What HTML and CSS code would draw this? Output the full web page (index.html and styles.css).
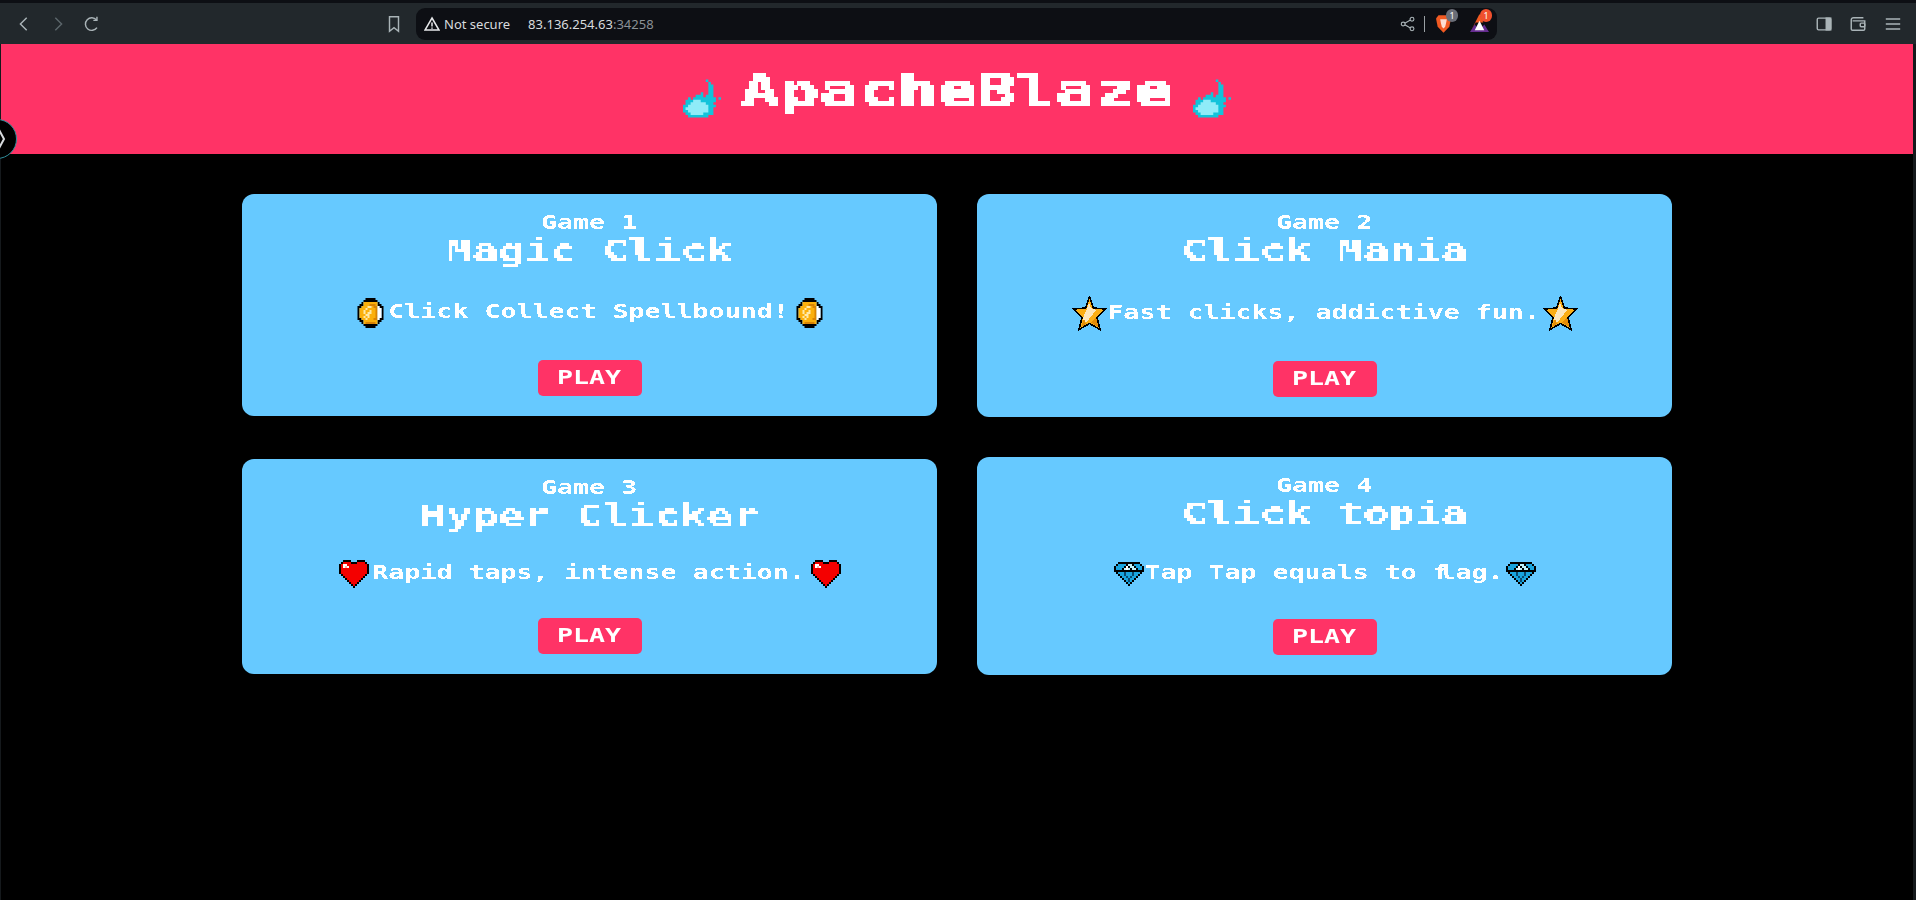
FILE: index.html
```html
<!DOCTYPE html>
<html lang="en">
<head>
  <meta charset="UTF-8" />
  <title>ApacheBlaze</title>
  <link rel="stylesheet" href="styles.css">
</head>
<body>
  <!-- text filters and the shared pixel icons -->
  <svg class="defs" width="0" height="0">
    <defs>
      <filter id="px5" x="0" y="0" width="100%" height="100%">
        <feFlood x="2" y="2" width="1" height="1" flood-color="#000"/>
        <feComposite width="4" height="4"/>
        <feTile result="grid"/>
        <feComposite in="SourceGraphic" in2="grid" operator="in"/>
        <feMorphology operator="dilate" radius="2"/>
        <feComponentTransfer><feFuncA type="discrete" tableValues="0 1"/></feComponentTransfer>
      </filter>
      <filter id="px3" x="0" y="0" width="100%" height="100%">
        <feFlood x="1" y="1" width="1" height="1" flood-color="#000"/>
        <feComposite width="3" height="3"/>
        <feTile result="grid"/>
        <feComposite in="SourceGraphic" in2="grid" operator="in"/>
        <feMorphology operator="dilate" radius="1"/>
        <feComponentTransfer><feFuncA type="discrete" tableValues="0 1"/></feComponentTransfer>
      </filter>
      <filter id="crisp" x="0" y="0" width="100%" height="100%">
        <feComponentTransfer><feFuncA type="discrete" tableValues="0 1"/></feComponentTransfer>
      </filter>

      <symbol id="flame" viewBox="0 -.5 15 15">
        <path stroke="#12c3da" d="M9 0h1M10 1h1M10 2h2M10 3h2M10 4h2M7 5h1M10 5h2M5 6h3M9 6h3M2 7h1M4 7h9M14 7h1M1 8h12M1 9h11M0 10h13M0 11h12M0 12h12M1 13h11M2 14h8"/>
        <path stroke="#8fecf8" d="M4 8h3M3 9h6M2 10h8M1 11h9M2 12h8M3 13h5"/>
      </symbol>

      <symbol id="coin" viewBox="0 -.5 13 15">
        <path stroke="#000" d="M4 0h5M3 1h7M2 2h1M10 2h1M1 3h2M10 3h2M0 4h2M11 4h2M0 5h1M12 5h1M0 6h1M12 6h1M0 7h1M12 7h1M0 8h1M12 8h1M0 9h1M12 9h1M0 10h2M11 10h2M1 11h2M10 11h2M2 12h1M10 12h1M3 13h7M4 14h5"/>
        <path stroke="#fbb00c" d="M3 2h7M3 3h7M2 4h8M1 5h9M1 6h9M1 7h9M1 8h9M1 9h9M2 10h8M3 11h7M3 12h7"/>
        <path stroke="#d98303" d="M6 3h3M8 4h2M9 5h1M9 6h1M9 7h1M9 8h1M9 9h1M8 10h2M4 12h5"/>
        <path stroke="#fff" d="M10 4h1M10 5h2M10 6h2M10 7h2M10 8h2M10 9h2M10 10h1"/>
        <path stroke="#ffe9a8" d="M5 4h2M4 5h1M3 6h1M6 6h1M3 7h1M5 7h2M4 8h2M3 9h1M5 9h1M4 10h1"/>
      </symbol>

      <symbol id="star" viewBox="0 0 35 35">
        <polygon points="17.500,1 21.500,12 33.500,13 25,21.500 28,33.500 17.500,27.500 7,33.500 10,21.500 1.500,13 13.500,12" fill="#fbae15" stroke="#000" stroke-width="1.600" shape-rendering="crispEdges"/>
        <polygon points="17,7 19,12 24,14 21,18 14,27 11,23 13,17 15,13" fill="#fde7bd" shape-rendering="crispEdges"/>
        <polygon points="24,21 26.500,31 19,26.500" fill="#e48c06" shape-rendering="crispEdges"/>
        <polygon points="12,22 9.500,31 14,28" fill="#e48c06" shape-rendering="crispEdges"/>
      </symbol>

      <symbol id="heart" viewBox="0 -.5 15 14">
        <path stroke="#000" d="M2 0h4M9 0h4M1 1h1M6 1h3M13 1h1M0 2h1M14 2h1M0 3h1M14 3h1M0 4h1M14 4h1M0 5h1M14 5h1M0 6h1M14 6h1M1 7h1M13 7h1M2 8h1M12 8h1M3 9h1M11 9h1M4 10h1M10 10h1M5 11h1M9 11h1M6 12h1M8 12h1M7 13h1"/>
        <path stroke="#f40000" d="M2 1h4M9 1h4M1 2h13M1 3h13M1 4h13M1 5h13M1 6h13M2 7h11M3 8h9M4 9h7M5 10h5M6 11h3M7 12h1"/>
        <path stroke="#fff" d="M2 2h2M2 3h1M4 3h1"/>
        <path stroke="#ffb0b0" d="M3 3h1"/>
      </symbol>

      <symbol id="gem" viewBox="0 -.5 15 12">
        <path stroke="#000" d="M2 0h11M1 1h1M6 1h1M9 1h1M13 1h1M0 2h1M5 2h1M7 2h1M10 2h1M14 2h1M0 3h1M4 3h1M8 3h1M11 3h1M14 3h1M0 4h15M1 5h1M13 5h1M2 6h1M12 6h1M3 7h1M11 7h1M4 8h1M10 8h1M5 9h1M9 9h1M6 10h1M8 10h1M7 11h1"/>
        <path stroke="#19a4de" d="M2 1h4M10 1h3M1 2h4M11 2h3M1 3h3M12 3h2M2 5h11M3 6h9M4 7h7M5 8h5M6 9h3M7 10h1"/>
        <path stroke="#bff2fb" d="M7 1h2M8 2h2M9 3h2M5 3h3"/>
        <path stroke="#fff" d="M6 2h1M6 3h1"/>
        <path stroke="#0a4a70" d="M5 5h1M9 5h1M5 6h1M9 6h1M6 7h1M8 7h1M7 8h1M7 9h1"/>
      </symbol>
    </defs>
  </svg>

  <div class="toolbar">
    <svg class="tool tool-back" viewBox="0 0 20 20"><path d="M13 3l-7 7 7 7"/></svg>
    <svg class="tool tool-fwd" viewBox="0 0 20 20"><path d="M7 3l7 7-7 7"/></svg>
    <svg class="tool tool-reload" viewBox="0 0 20 20"><path d="M15 5.500A7 7 0 1 0 15.500 14"/><path d="M15.500 2v4h-4"/></svg>
    <svg class="tool tool-mark" viewBox="0 0 20 20"><path d="M5 2h10v16l-5-4-5 4z"/></svg>

    <div class="omnibox">
      <svg class="warn" viewBox="0 0 16 16"><path d="M8 2l7 12H1z"/><path d="M8 6.500v4M8 11.500v1.200"/></svg>
      <span class="secure">Not secure</span>
      <span class="url">83.136.254.63<span class="port">:34258</span></span>
      <svg class="tool tool-share" viewBox="0 0 20 20"><circle cx="15" cy="4" r="2.400"/><circle cx="15" cy="16" r="2.400"/><circle cx="4" cy="10" r="2.400"/><path d="M6 9l7-4M6 11l7 4"/></svg>
      <span class="divider"></span>
      <span class="ext ext-brave">
        <svg viewBox="0 0 18 22"><path class="lion" d="M3 1h12l3 4-2 10-7 7-7-7L0 5z"/><path class="lion-face" d="M5 6h8l-1 5-1 4-2 2-2-2-1-4z"/></svg>
        <span class="badge badge-grey">1</span>
      </span>
      <span class="ext ext-bat">
        <svg viewBox="0 0 20 20"><path fill="#f15a22" d="M10 0l4 9H6L1 18z"/><path fill="#662d91" d="M0 19l5-8 5 6 5-6 5 8z"/><path fill="#fff" d="M10 7l5 10H5z"/></svg>
        <span class="badge badge-red">1</span>
      </span>
    </div>

    <svg class="tool tool-panel" viewBox="0 0 20 20"><rect x="2.500" y="3.500" width="15" height="13" rx="1.500"/><rect class="solid" x="12.500" y="3.500" width="5" height="13"/></svg>
    <svg class="tool tool-wallet" viewBox="0 0 20 20"><path d="M16 3H5a2.500 2.500 0 0 0-2.500 2.500v10A1.500 1.500 0 0 0 4 17h12a1.500 1.500 0 0 0 1.500-1.500v-9H4"/><rect x="12.500" y="9" width="5" height="4" rx="1"/></svg>
    <svg class="tool tool-menu" viewBox="0 0 20 20"><path d="M2 4.500h16M2 10h16M2 15.500h16"/></svg>
  </div>

  <div class="frame">
    <div class="page">
      <header class="hero">
        <svg class="flame"><use href="#flame"/></svg>
        <h1 class="hero-title"><span>ApacheBlaze</span></h1>
        <svg class="flame"><use href="#flame"/></svg>
      </header>

      <div class="games">
        <div class="card card-top">
          <h3 class="game-no"><span>Game 1</span></h3>
          <h2 class="game-name"><span>Magic Click</span></h2>
          <div class="desc desc-coin">
            <svg class="icon coin"><use href="#coin"/></svg>
            <p class="desc-text" style="--chars:25"><span>Click Collect Spellbound!</span></p>
            <svg class="icon coin"><use href="#coin"/></svg>
          </div>
          <a class="play" href="#"><span>PLAY</span></a>
        </div>

        <div class="card">
          <h3 class="game-no"><span>Game 2</span></h3>
          <h2 class="game-name"><span>Click Mania</span></h2>
          <div class="desc desc-star">
            <svg class="icon star"><use href="#star"/></svg>
            <p class="desc-text" style="--chars:27"><span>Fast clicks, addictive fun.</span></p>
            <svg class="icon star"><use href="#star"/></svg>
          </div>
          <a class="play" href="#"><span>PLAY</span></a>
        </div>

        <div class="card">
          <h3 class="game-no"><span>Game 3</span></h3>
          <h2 class="game-name"><span>Hyper Clicker</span></h2>
          <div class="desc desc-heart">
            <svg class="icon heart"><use href="#heart"/></svg>
            <p class="desc-text" style="--chars:27"><span>Rapid taps, intense action.</span></p>
            <svg class="icon heart"><use href="#heart"/></svg>
          </div>
          <a class="play" href="#"><span>PLAY</span></a>
        </div>

        <div class="card">
          <h3 class="game-no"><span>Game 4</span></h3>
          <h2 class="game-name"><span>Click topia</span></h2>
          <div class="desc desc-gem">
            <svg class="icon gem"><use href="#gem"/></svg>
            <p class="desc-text" style="--chars:22"><span>Tap Tap equals to <i class="tight">f</i>lag.</span></p>
            <svg class="icon gem"><use href="#gem"/></svg>
          </div>
          <a class="play" href="#"><span>PLAY</span></a>
        </div>
      </div>

      <div class="float-btn">
        <svg viewBox="0 0 38 38"><path d="M20 8l6 11-6 11"/></svg>
      </div>
    </div>
  </div>
</body>
</html>
```

FILE: styles.css
```css
* {
  box-sizing: border-box;
}

html,
body {
  margin: 0;
  height: 100%;
}

body {
  display: flex;
  flex-direction: column;
  background: #000;
  overflow: hidden;
  font-family: "Noto Sans", sans-serif;
}

.defs {
  position: absolute;
}

/* browser chrome */
.toolbar {
  display: flex;
  align-items: center;
  flex: 0 0 44px;
  padding-right: 14px;
  background: #22282c;
  border-top: 3px solid #0d0f14;
}

.tool {
  flex: none;
  width: 18px;
  height: 18px;
  fill: none;
  stroke: #aab4b8;
  stroke-width: 1.6;
}

.tool-back {
  margin-left: 15px;
}

.tool-fwd {
  margin-left: 16px;
  stroke: #5c666b;
}

.tool-reload {
  margin-left: 16px;
}

.tool-mark {
  margin-left: 284px;
}

.omnibox {
  display: flex;
  align-items: center;
  width: 1089px;
  height: 32px;
  margin-left: 13px;
  background: #0d0f14;
  border-radius: 9px;
}

.warn {
  width: 16px;
  height: 16px;
  margin-left: 8px;
  fill: none;
  stroke: #e6e8ea;
  stroke-width: 1.5;
}

.secure {
  margin-left: 4px;
  font-size: 13px;
  color: #d8dbde;
}

.url {
  margin-left: 18px;
  font-size: 13px;
  color: #d8dbde;
}

.port {
  color: #8b9196;
}

.tool-share {
  width: 16px;
  height: 16px;
  margin-left: auto;
  stroke-width: 1.4;
}

.divider {
  width: 1px;
  height: 16px;
  margin: 0 0 0 8px;
  background: #9aa0a4;
}

.ext {
  position: relative;
  display: flex;
}

.ext-brave {
  margin-left: 11px;
}

.ext-brave svg {
  width: 15px;
  height: 19px;
}

.lion {
  fill: #f15a22;
}

.lion-face {
  fill: #fff;
  opacity: 0.8;
}

.ext-bat {
  margin: 0 8px 0 19px;
}

.ext-bat svg {
  width: 19px;
  height: 19px;
}

.badge {
  position: absolute;
  top: -5px;
  left: 10px;
  width: 12px;
  height: 13px;
  border-radius: 6px;
  font-size: 9px;
  line-height: 13px;
  text-align: center;
  color: #fff;
}

.badge-grey {
  background: #6a6e78;
}

.badge-red {
  background: #f0502d;
}

.tool-panel {
  margin-left: 318px;
}

.solid {
  fill: #aab4b8;
}

.tool-wallet {
  margin-left: 16px;
}

.tool-menu {
  margin-left: 17px;
}

/* page */
.frame {
  flex: 1;
  padding: 0 3px 0 1px;
  background: #15191c;
}

.page {
  position: relative;
  height: 100%;
  background: #000;
  color: #fff;
  font-family: "DejaVu Sans Mono", monospace;
  font-weight: bold;
}

.hero {
  display: flex;
  justify-content: center;
  align-items: flex-start;
  height: 110px;
  padding-top: 35px;
  background: #ff3366;
}

.flame {
  width: 38px;
  height: 39px;
}

.hero-title {
  width: 472px;
  margin: -18px 0 0;
  font-size: 45px;
  line-height: 60px;
  text-align: center;
  filter: url(#px5);
}

.hero-title span {
  display: inline-block;
  transform: scaleX(1.454);
}

.games {
  display: grid;
  grid-template-columns: 695px 695px;
  justify-content: center;
  align-items: center;
  gap: 40px;
  margin-top: 40px;
}

.card {
  display: flex;
  flex-direction: column;
  align-items: center;
  padding: 16px 0 20px;
  background: #66c9ff;
  border-radius: 12px;
}

.card-top {
  align-self: start;
}

.game-no {
  width: 100%;
  margin: 0;
  font-size: 20px;
  line-height: 24px;
  text-align: center;
  filter: url(#crisp);
}

.game-no span,
.desc-text span,
.play span {
  display: inline-block;
  transform: scaleX(1.33);
}

.game-name {
  width: 100%;
  margin: 0;
  font-size: 30px;
  line-height: 34px;
  text-align: center;
  filter: url(#px3);
}

.game-name span {
  display: inline-block;
  transform: scaleX(1.44);
}

.desc {
  display: flex;
  align-items: center;
  justify-content: center;
  margin: 25px 0 27px;
}

.desc-coin {
  height: 40px;
}

.desc-star {
  height: 41px;
}

.desc-heart {
  height: 33px;
}

.desc-gem {
  height: 36px;
}

.icon {
  flex: none;
}

.coin {
  width: 27px;
  height: 30px;
  margin: 0 1px;
}

.star {
  width: 35px;
  height: 35px;
  margin: 0 -3px;
}

.heart {
  width: 30px;
  height: 28px;
}

.gem {
  width: 30px;
  height: 24px;
}

.desc-text {
  width: calc(var(--chars) * 16px);
  margin: -4px 6px 0 4px;
  font-size: 20px;
  line-height: 24px;
  text-align: center;
  white-space: nowrap;
  filter: url(#crisp);
}

.tight {
  font-style: normal;
  letter-spacing: -7px;
}

.play {
  display: block;
  width: 104px;
  height: 36px;
  background: #ff3366;
  border-radius: 5px;
  font-size: 20px;
  line-height: 34px;
  text-align: center;
  text-decoration: none;
  color: #fff;
}

.float-btn {
  position: absolute;
  top: 75px;
  left: -24px;
  width: 40px;
  height: 40px;
  background: #000;
  border: 1px solid #2f8f9c;
  border-radius: 50%;
}

.float-btn svg {
  display: block;
  width: 38px;
  height: 38px;
  fill: none;
  stroke: #d8dbde;
  stroke-width: 2;
}
```
